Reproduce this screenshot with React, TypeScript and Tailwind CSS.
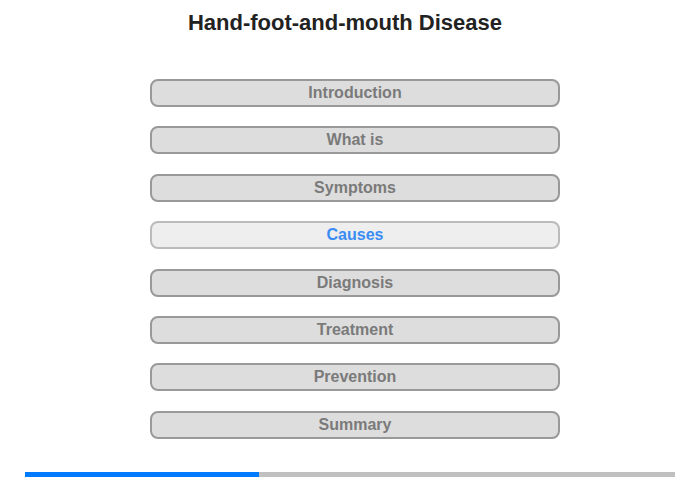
const sections = [
  "Introduction",
  "What is",
  "Symptoms",
  "Causes",
  "Diagnosis",
  "Treatment",
  "Prevention",
  "Summary",
];

const active = "Causes";

export default function App() {
  return (
    <div
      className="relative h-[480px] w-[700px] bg-white"
      style={{ fontFamily: '"Liberation Sans", Arial, sans-serif' }}
    >
      <h1 className="pr-[10px] pt-[10px] text-center text-[22px] font-bold leading-[26px] text-[#222]">
        Hand-foot-and-mouth Disease
      </h1>

      <div className="mt-[43px] flex flex-col items-center gap-[19.4px] pl-[10px]">
        {sections.map((s) => {
          const isActive = s === active;
          return (
            <button
              key={s}
              className={
                isActive
                  ? "h-[28px] w-[410px] rounded-[8px] border-2 border-[#bbbbbb] bg-[#eeeeee] text-[16px] font-bold leading-none text-[#3a8cf4]"
                  : "h-[28px] w-[410px] rounded-[8px] border-2 border-[#999999] bg-[#dddddd] text-[16px] font-bold leading-none text-[#7a7a7a]"
              }
            >
              {s}
            </button>
          );
        })}
      </div>

      {/* progress */}
      <div className="absolute left-[25px] top-[472px] flex h-[5px] w-[650px] bg-[#c0c0c0]">
        <div className="h-full w-[234px] bg-[#007bff]" />
      </div>
    </div>
  );
}
